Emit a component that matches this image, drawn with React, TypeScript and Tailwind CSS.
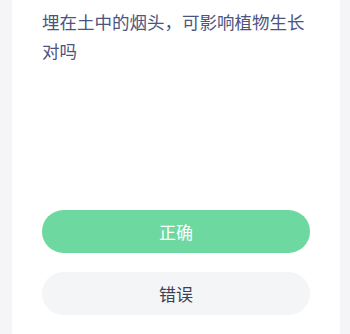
export default function App() {
  return (
    <div className="flex h-[334px] w-full bg-[#f5f5f7] pl-3 pr-[10px]" style={{ fontFamily: '"Noto Sans CJK SC", "Noto Sans", sans-serif' }}>
      <div className="flex flex-1 flex-col bg-white px-[30px]">
        <p className="mt-[7px] text-[17.5px] leading-[29px] text-[#4b5580]">
          埋在土中的烟头，可影响植物生长对吗
        </p>
        <div className="mt-auto mb-[19px] flex flex-col gap-[19px]">
          <button className="h-[43px] w-full rounded-full bg-[#6dd89f] text-[17px] text-white">
            正确
          </button>
          <button className="h-[43px] w-full rounded-full bg-[#f4f5f7] text-[17px] text-[#3a4156]">
            错误
          </button>
        </div>
      </div>
    </div>
  )
}
